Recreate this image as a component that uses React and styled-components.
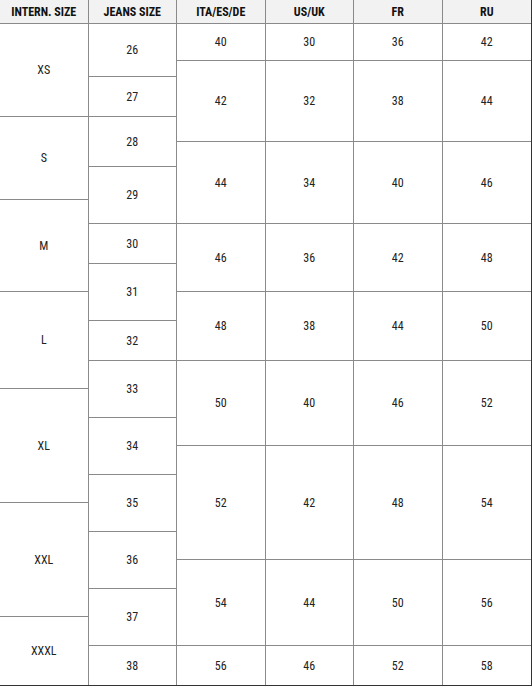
import React from 'react'
import styled, { createGlobalStyle } from 'styled-components'

const GlobalStyle = createGlobalStyle`
  html, body {
    margin: 0;
    padding: 0;
    background: #fff;
  }
  body {
    font-family: "Liberation Sans Narrow", "Roboto Condensed", "Liberation Sans", Arial, sans-serif;
  }
`

// header row + every horizontal band the rowspans cut the body into
const tracks = [24, 37, 16, 40, 25, 25, 33, 24, 40, 28, 29, 40, 28, 29, 28, 29, 28, 29, 28, 29, 28, 29, 39]

const Table = styled.div`
  display: grid;
  width: 532px;
  box-sizing: border-box;
  grid-template-columns: repeat(6, 1fr);
  grid-template-rows: ${tracks.map((t) => `${t}px`).join(' ')};
  border-right: 1px solid #333;
  border-bottom: 1px solid #333;
`

const Head = styled.div`
  grid-row: 1;
  display: flex;
  align-items: center;
  justify-content: center;
  background: #f2f2f2;
  border-bottom: 1px solid #8a8a8a;
  border-right: ${(p) => (p.$last ? 'none' : '1px solid #8a8a8a')};
  font-size: 12px;
  font-weight: bold;
  color: #111;
  box-sizing: border-box;
`

const Cell = styled.div`
  grid-column: ${(p) => p.$col};
  grid-row: ${(p) => p.$from} / span ${(p) => p.$span};
  display: flex;
  align-items: center;
  justify-content: center;
  border-right: ${(p) => (p.$col === 6 ? 'none' : '1px solid #8a8a8a')};
  border-bottom: ${(p) => (p.$from + p.$span > tracks.length ? 'none' : '1px solid #8a8a8a')};
  font-size: 12px;
  color: #222;
  box-sizing: border-box;
`

const headers = ['INTERN. SIZE', 'JEANS SIZE', 'ITA/ES/DE', 'US/UK', 'FR', 'RU']

// [label, first grid row, span]
const intern = [
  ['XS', 2, 3], ['S', 5, 3], ['M', 8, 3], ['L', 11, 3],
  ['XL', 14, 4], ['XXL', 18, 4], ['XXXL', 22, 2],
]

const jeans = [
  ['26', 2, 2], ['27', 4, 1], ['28', 5, 2], ['29', 7, 2], ['30', 9, 1],
  ['31', 10, 2], ['32', 12, 1], ['33', 13, 2], ['34', 15, 2], ['35', 17, 2],
  ['36', 19, 2], ['37', 21, 2], ['38', 23, 1],
]

const bands = [[2, 1], [3, 3], [6, 3], [9, 2], [11, 2], [13, 3], [16, 4], [20, 3], [23, 1]]
const ita = ['40', '42', '44', '46', '48', '50', '52', '54', '56']
const us = ['30', '32', '34', '36', '38', '40', '42', '44', '46']
const fr = ['36', '38', '40', '42', '44', '46', '48', '50', '52']
const ru = ['42', '44', '46', '48', '50', '52', '54', '56', '58']

export default function App() {
  return (
    <>
      <GlobalStyle />
      <Table>
        {headers.map((h, i) => (
          <Head key={h} $last={i === headers.length - 1}>{h}</Head>
        ))}
        {intern.map(([v, from, span]) => (
          <Cell key={'i' + v} $col={1} $from={from} $span={span}>{v}</Cell>
        ))}
        {jeans.map(([v, from, span]) => (
          <Cell key={'j' + v} $col={2} $from={from} $span={span}>{v}</Cell>
        ))}
        {[ita, us, fr, ru].map((col, c) =>
          col.map((v, i) => (
            <Cell key={c + '-' + i} $col={c + 3} $from={bands[i][0]} $span={bands[i][1]}>{v}</Cell>
          ))
        )}
      </Table>
    </>
  )
}
